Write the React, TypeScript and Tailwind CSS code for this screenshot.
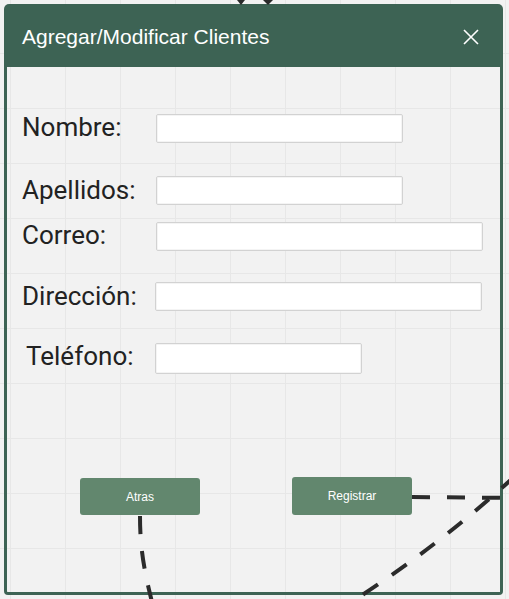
import React from "react";

const labelCls =
  "text-[26px] leading-none text-[#222222] font-['Roboto',sans-serif] shrink-0";
const inputCls =
  "bg-white border border-[#d2d2d2] rounded-[2px] shadow-[inset_0_0_0_1px_#f4f4f4] outline-none";

export default function App() {
  return (
    <div className="relative w-[509px] h-[599px] overflow-hidden bg-[#f2f2f2] bg-[linear-gradient(to_right,#e7e7e7_1px,transparent_1px),linear-gradient(to_bottom,#e7e7e7_1px,transparent_1px)] bg-[size:55px_55px] bg-[position:10px_53px]">
      <div className="ml-[4px] pt-[4px] w-[499px] h-[595px] flex flex-col">
        {/* header */}
        <div className="h-[63px] shrink-0 bg-[#3d6354] rounded-t-[5px] flex items-center justify-between pl-[18px] pr-[24px]">
          <span className="text-white text-[21px] font-['Liberation_Sans',Arial,sans-serif] leading-none pt-[1px]">
            Agregar/Modificar Clientes
          </span>
          <svg width="16" height="16" viewBox="0 0 16 16" className="mt-[2px]">
            <path d="M1 1 L15 15 M15 1 L1 15" stroke="white" strokeWidth="1.6" fill="none" />
          </svg>
        </div>
        {/* body */}
        <div className="flex-1 border-x-[3px] border-b-[3px] border-[#3d6354] rounded-b-[4px] flex flex-col pl-[15px]">
          <div className="mt-[47px] flex items-center">
            <span className={`${labelCls} w-[134px] -mt-[3px]`}>Nombre:</span>
            <input className={`${inputCls} w-[247px] h-[29px]`} />
          </div>
          <div className="mt-[33px] flex items-center">
            <span className={`${labelCls} w-[134px] -mt-[2px]`}>Apellidos:</span>
            <input className={`${inputCls} w-[247px] h-[29px]`} />
          </div>
          <div className="mt-[17px] flex items-center">
            <span className={`${labelCls} w-[134px] -mt-[4px]`}>Correo:</span>
            <input className={`${inputCls} w-[327px] h-[29px]`} />
          </div>
          <div className="mt-[31px] flex items-center">
            <span className={`${labelCls} w-[133px] -mt-[2px]`}>Dirección:</span>
            <input className={`${inputCls} w-[327px] h-[29px]`} />
          </div>
          <div className="mt-[32px] flex items-center">
            <span className={`${labelCls} w-[129px] ml-[4px] -mt-[5px]`}>Teléfono:</span>
            <input className={`${inputCls} w-[207px] h-[31px]`} />
          </div>
          <div className="mt-[104px] flex items-start pl-[58px] gap-[92px]">
            <button className="w-[120px] h-[37px] bg-[#62876e] rounded-[3px] text-white text-[12px] font-['Liberation_Sans',Arial,sans-serif]">
              Atras
            </button>
            <button className="w-[120px] h-[38px] -mt-[1px] bg-[#62876e] rounded-[3px] text-white text-[12px] font-['Liberation_Sans',Arial,sans-serif]">
              Registrar
            </button>
          </div>
        </div>
      </div>
      {/* connectors overlay */}
      <svg
        className="absolute inset-0 pointer-events-none"
        width="509"
        height="599"
        viewBox="0 0 509 599"
      >
        <g stroke="#2b2b2b" strokeWidth="4" fill="none" strokeDasharray="18 17">
          <path d="M140 516 C 140 555, 146 580, 158 625" />
          <path d="M412 497 L 520 498" />
          <path d="M515 476 Q 440 545 350 603" />
        </g>
        <path d="M237 0 L245 0 L241 5 Z" fill="#2b2b2b" />
        <path d="M263 0 L273 0 L268 5 Z" fill="#2b2b2b" />
      </svg>
    </div>
  );
}
